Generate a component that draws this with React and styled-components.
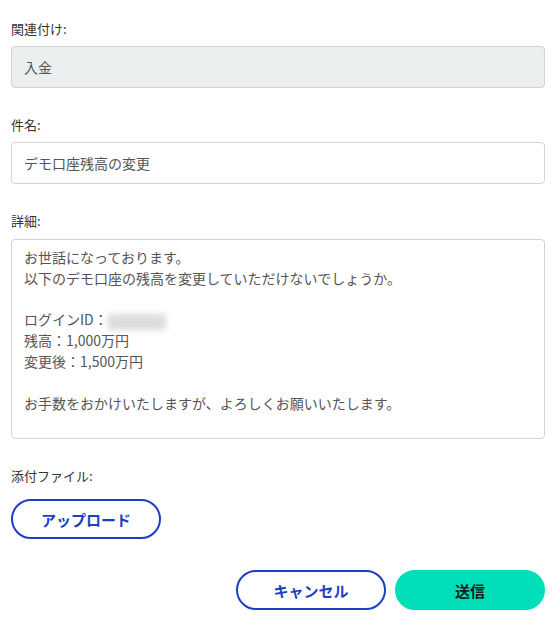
import styled, { createGlobalStyle } from 'styled-components';

const GlobalStyle = createGlobalStyle`
  html, body {
    margin: 0;
    padding: 0;
    background: #fff;
  }
  body {
    font-family: "Noto Sans CJK JP", "Noto Sans", sans-serif;
    color: #333;
  }
`;

const Form = styled.form`
  padding: 20px 15px 0 11px;
  display: flex;
  flex-direction: column;
`;

const Field = styled.div`
  display: flex;
  flex-direction: column;
  align-items: stretch;
  margin-bottom: ${(p) => p.$gap ?? 28}px;
`;

const Label = styled.label`
  font-size: 13px;
  line-height: 18px;
  color: #333;
  margin-bottom: ${(p) => p.$gap ?? 8}px;
`;

const Input = styled.div`
  box-sizing: border-box;
  height: 42px;
  border: 1px solid #cfd4d6;
  border-radius: 4px;
  background: ${(p) => (p.$disabled ? '#ebeff0' : '#fff')};
  padding: 0 12px;
  display: flex;
  align-items: center;
  font-size: 14px;
  color: #555;
`;

const TextArea = styled.div`
  box-sizing: border-box;
  height: 200px;
  border: 1px solid #cfd4d6;
  border-radius: 4px;
  padding: 7px 12px;
  font-size: 14px;
  line-height: 20.8px;
  color: #555;
  white-space: pre-wrap;
`;

const Blurred = styled.span`
  display: inline-block;
  vertical-align: middle;
  width: 58px;
  height: 16px;
  background: #dcdcdc;
  filter: blur(3px);
`;

const PillButton = styled.button`
  box-sizing: border-box;
  display: block;
  width: 150px;
  height: 40px;
  border-radius: 20px;
  font-family: "Noto Sans CJK JP", sans-serif;
  font-weight: 700;
  font-size: 15px;
  cursor: pointer;
  border: 2px solid ${(p) => (p.$primary ? '#00dfb9' : '#1c3fc4')};
  background: ${(p) => (p.$primary ? '#00dfb9' : '#fff')};
  color: ${(p) => (p.$primary ? '#1a1a1a' : '#1c3fc4')};
`;

const Actions = styled.div`
  display: flex;
  justify-content: flex-end;
  gap: 9px;
  margin-top: 31px;
`;

const App = () => {
  return (
    <>
      <GlobalStyle />
      <Form onSubmit={(e) => e.preventDefault()}>
        <Field>
          <Label $gap={8}>関連付け:</Label>
          <Input $disabled>入金</Input>
        </Field>
        <Field>
          <Label>件名:</Label>
          <Input>デモ口座残高の変更</Input>
        </Field>
        <Field>
          <Label $gap={9}>詳細:</Label>
          <TextArea>
            {'お世話になっております。\n以下のデモ口座の残高を変更していただけないでしょうか。\n\nログインID：'}
            <Blurred />
            {'\n残高：1,000万円\n変更後：1,500万円\n\nお手数をおかけいたしますが、よろしくお願いいたします。'}
          </TextArea>
        </Field>
        <Field $gap={0}>
          <Label $gap={14}>添付ファイル:</Label>
          <PillButton type="button">アップロード</PillButton>
        </Field>
        <Actions>
          <PillButton type="button">キャンセル</PillButton>
          <PillButton type="submit" $primary>送信</PillButton>
        </Actions>
      </Form>
    </>
  );
};

export default App;
